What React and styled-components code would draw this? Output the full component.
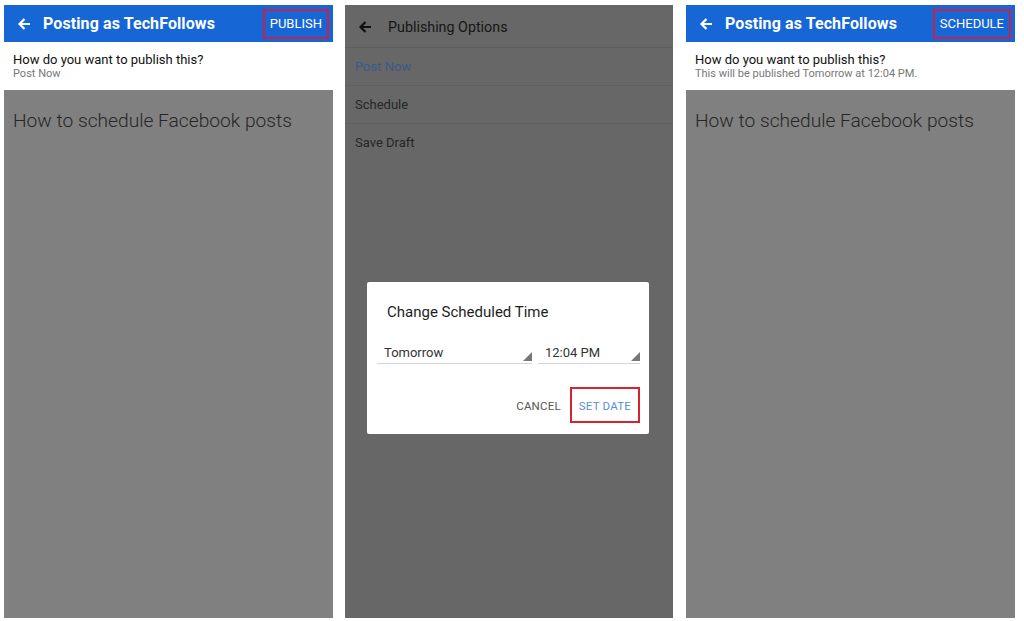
import styled, { createGlobalStyle } from 'styled-components';

const GlobalStyle = createGlobalStyle`
  html, body {
    margin: 0;
    padding: 0;
    background: #ffffff;
    font-family: Roboto, 'Noto Sans', sans-serif;
  }
`;

function BackArrow({ color = '#ffffff' }) {
  return (
    <svg width="14" height="14" viewBox="0 0 14 14">
      <path d="M13 7H2.5M7.5 2L2.5 7l5 5" fill="none" stroke={color} strokeWidth="2.2" />
    </svg>
  );
}

function ComposeScreen({ action, subtitle }) {
  return (
    <Phone>
      <Header>
        <HeaderLeft>
          <BackArrow />
          <HeaderTitle>Posting as TechFollows</HeaderTitle>
        </HeaderLeft>
        <ActionButton>{action}</ActionButton>
      </Header>
      <PublishInfo>
        <Question>How do you want to publish this?</Question>
        <Subtitle>{subtitle}</Subtitle>
      </PublishInfo>
      <Body>
        <PostTitle>How to schedule Facebook posts</PostTitle>
      </Body>
    </Phone>
  );
}

function OptionsScreen() {
  return (
    <DimPhone>
      <OptionsHeader>
        <BackArrow color="#111111" />
        <OptionsTitle>Publishing Options</OptionsTitle>
      </OptionsHeader>
      <OptionRow $active>Post Now</OptionRow>
      <OptionRow>Schedule</OptionRow>
      <OptionRow $last>Save Draft</OptionRow>

      <Dialog>
        <DialogTitle>Change Scheduled Time</DialogTitle>
        <Pickers>
          <Picker $grow>Tomorrow</Picker>
          <Picker>12:04 PM</Picker>
        </Pickers>
        <DialogActions>
          <TextButton>CANCEL</TextButton>
          <TextButton $primary>SET DATE</TextButton>
        </DialogActions>
      </Dialog>
    </DimPhone>
  );
}

export default function App() {
  return (
    <>
      <GlobalStyle />
      <Page>
        <ComposeScreen action="PUBLISH" subtitle="Post Now" />
        <OptionsScreen />
        <ComposeScreen action="SCHEDULE" subtitle="This will be published Tomorrow at 12:04 PM." />
      </Page>
    </>
  );
}

const Page = styled.div`
  display: flex;
  gap: 12px;
  padding: 5px 9px 3px 4px;
  height: 621px;
  box-sizing: border-box;

  & > :last-child {
    margin-left: 1px;
  }
`;

const Phone = styled.div`
  width: 329px;
  height: 613px;
  display: flex;
  flex-direction: column;
  background: #ffffff;
  position: relative;
`;

const Header = styled.div`
  height: 37px;
  background: #1766d6;
  display: flex;
  align-items: center;
  justify-content: space-between;
  padding: 0 4px 0 13px;
`;

const HeaderLeft = styled.div`
  display: flex;
  align-items: center;
  gap: 12px;
`;

const HeaderTitle = styled.span`
  color: #ffffff;
  font-size: 16px;
  font-weight: 700;
  letter-spacing: 0.1px;
`;

const ActionButton = styled.span`
  color: #ffffff;
  font-size: 13px;
  padding: 5px 5px;
  border: 2px solid #c7234a;
  line-height: 16px;
`;

const PublishInfo = styled.div`
  height: 48px;
  padding: 10px 9px 0;
  box-sizing: border-box;
`;

const Question = styled.div`
  font-size: 13px;
  color: #111111;
  line-height: 15px;
`;

const Subtitle = styled.div`
  font-size: 11px;
  color: #777777;
  line-height: 13px;
`;

const Body = styled.div`
  flex: 1;
  background: #808080;
  padding: 19px 9px 0;
`;

const PostTitle = styled.div`
  font-size: 19.2px;
  font-weight: 300;
  color: #262626;
`;

const DimPhone = styled(Phone)`
  width: 328px;
  background: #676767;
`;

const OptionsHeader = styled.div`
  height: 43px;
  display: flex;
  align-items: center;
  gap: 16px;
  padding: 2px 0 0 13px;
  box-sizing: border-box;
  border-bottom: 1px solid #5d5d5d;
`;

const OptionsTitle = styled.span`
  font-size: 14.3px;
  color: #161616;
`;

const OptionRow = styled.div`
  height: 37px;
  display: flex;
  align-items: center;
  padding-left: 10px;
  font-size: 13px;
  color: ${(p) => (p.$active ? '#3a5a8c' : '#262626')};
  border-bottom: ${(p) => (p.$last ? 'none' : '1px solid #5f5f5f')};
`;

const Dialog = styled.div`
  position: absolute;
  left: 22px;
  top: 277px;
  width: 282px;
  height: 152px;
  background: #ffffff;
  border-radius: 2px;
  box-sizing: border-box;
  padding: 21px 9px 0 10px;
`;

const DialogTitle = styled.div`
  font-size: 15px;
  color: #1e1e1e;
  padding-left: 10px;
`;

const Pickers = styled.div`
  display: flex;
  gap: 6px;
  margin-top: 24px;
`;

const Picker = styled.div`
  position: relative;
  width: ${(p) => (p.$grow ? '155px' : '102px')};
  font-size: 13px;
  color: #333333;
  padding: 0 0 3px 7px;
  box-sizing: border-box;
  border-bottom: 1px solid #d4d4d4;

  &::after {
    content: '';
    position: absolute;
    right: 0;
    bottom: 2px;
    border-left: 9px solid transparent;
    border-bottom: 9px solid #777777;
  }
`;

const DialogActions = styled.div`
  display: flex;
  justify-content: flex-end;
  align-items: center;
  margin-top: 23px;
`;

const TextButton = styled.span`
  font-size: 11.5px;
  color: ${(p) => (p.$primary ? '#5d8fd4' : '#555555')};
  padding: ${(p) => (p.$primary ? '10px 7px 8px' : '10px 7px 8px 0')};
  border: 2px solid ${(p) => (p.$primary ? '#d6232e' : 'transparent')};
  letter-spacing: 0.2px;
`;
